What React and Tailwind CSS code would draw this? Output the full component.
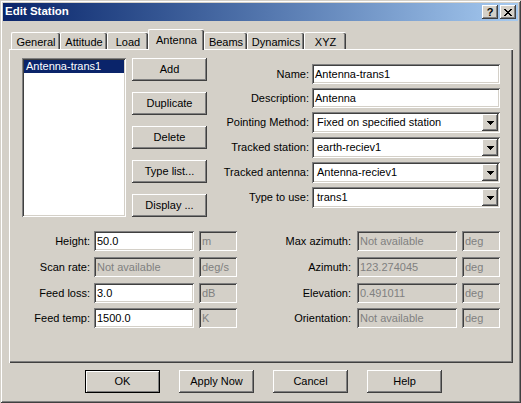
import React from "react";

const raised =
  "shadow-[inset_-1px_-1px_0_#404040,inset_1px_1px_0_#ffffff,inset_-2px_-2px_0_#808080,inset_2px_2px_0_#d4d0c8]";
const sunken =
  "shadow-[inset_1px_1px_0_#808080,inset_-1px_-1px_0_#ffffff,inset_2px_2px_0_#404040,inset_-2px_-2px_0_#d4d0c8]";

function Btn({ children, isDefault }) {
  if (isDefault) {
    return (
      <div className="w-[75px] h-[23px] border border-black flex items-center justify-center text-[11px] text-black shadow-[inset_1px_1px_0_#ffffff,inset_-1px_-1px_0_#808080]">
        {children}
      </div>
    );
  }
  return (
    <div className={`w-[75px] h-[23px] flex items-center justify-center text-[11px] text-black ${raised}`}>
      {children}
    </div>
  );
}

function Edit({ value, disabled, w }) {
  return (
    <div
      className={`${w} h-[20px] flex items-center pl-[3px] text-[11px] whitespace-nowrap overflow-hidden ${sunken} ${
        disabled ? "bg-[#d4d0c8] text-[#808080]" : "bg-white text-black"
      }`}
    >
      {value}
    </div>
  );
}

function Arrow() {
  return (
    <svg width="7" height="4" viewBox="0 0 7 4" shapeRendering="crispEdges">
      <path d="M0 0h7v1h-1v1h-1v1h-1v1h-1v-1h-1v-1h-1v-1h-1z" fill="#000" />
    </svg>
  );
}

function Combo({ value }) {
  return (
    <div className={`w-[188px] h-[21px] flex p-[2px] bg-white ${sunken}`}>
      <div className="flex-1 flex items-center pl-[3px] text-[11px] text-black whitespace-nowrap overflow-hidden">
        {value}
      </div>
      <div className={`w-[16px] h-[17px] bg-[#d4d0c8] flex items-center justify-center ${raised}`}>
        <Arrow />
      </div>
    </div>
  );
}

function CloseGlyph() {
  const rows = [
    "11000011",
    "01100110",
    "00111100",
    "00011000",
    "00111100",
    "01100110",
    "11000011",
  ];
  return (
    <svg width="8" height="7" viewBox="0 0 8 7" shapeRendering="crispEdges">
      {rows.map((r, y) =>
        r.split("").map((c, x) =>
          c === "1" ? <rect key={`${x}-${y}`} x={x} y={y} width="1" height="1" fill="#000" /> : null
        )
      )}
    </svg>
  );
}

function Tab({ label, w, selected }) {
  if (selected) {
    return (
      <div
        className={`${w} h-[21px] -mb-[1px] relative z-10 bg-[#d4d0c8] border-l border-t border-white rounded-tl-[2px] rounded-tr-[2px] shadow-[inset_-1px_0_0_#404040,inset_-2px_0_0_#808080] flex justify-center pt-[2px] text-[11px] text-black`}
      >
        {label}
      </div>
    );
  }
  return (
    <div
      className={`${w} h-[17px] bg-[#d4d0c8] border-l border-t border-white rounded-tl-[2px] rounded-tr-[2px] shadow-[inset_-1px_0_0_#404040,inset_-2px_0_0_#808080] flex justify-center pt-[1px] text-[11px] text-black`}
    >
      {label}
    </div>
  );
}

function Row({ label, children, mt }) {
  return (
    <div className={`flex items-center justify-end ${mt}`}>
      <span className="mr-[3px] text-[11px] text-black whitespace-nowrap">{label}</span>
      {children}
    </div>
  );
}

function BottomRow({ mt, lLabel, lValue, lDisabled, lUnit, rLabel, rValue, rUnit }) {
  return (
    <div className={`flex justify-between items-center ${mt}`}>
      <div className="flex items-center">
        <span className="w-[68px] text-right text-[11px] whitespace-nowrap text-black">{lLabel}</span>
        <div className="ml-[4px]">
          <Edit value={lValue} disabled={lDisabled} w="w-[100px]" />
        </div>
        <div className="ml-[5px]">
          <Edit value={lUnit} disabled w="w-[38px]" />
        </div>
      </div>
      <div className="flex items-center">
        <span className="text-right text-[11px] text-black whitespace-nowrap">{rLabel}</span>
        <div className="ml-[6px]">
          <Edit value={rValue} disabled w="w-[100px]" />
        </div>
        <div className="ml-[5px]">
          <Edit value={rUnit} disabled w="w-[38px]" />
        </div>
      </div>
    </div>
  );
}

export default function App() {
  return (
    <div className="w-[521px] h-[403px] bg-[#d4d0c8] p-[3px] flex flex-col font-['Liberation_Sans',Arial,sans-serif] shadow-[inset_1px_1px_0_#d4d0c8,inset_-1px_-1px_0_#404040,inset_2px_2px_0_#ffffff,inset_-2px_-2px_0_#808080] overflow-hidden">
      {/* Title bar */}
      <div className="h-[18px] flex items-center pl-[2px] pr-[2px] bg-linear-to-r from-[#0a246a] to-[#a6caf0]">
        <span className="flex-1 text-white font-bold text-[11.5px] leading-none">Edit Station</span>
        <div className={`w-[16px] h-[14px] bg-[#d4d0c8] flex items-center justify-center text-[11px] font-bold text-black leading-none ${raised}`}>
          ?
        </div>
        <div className={`ml-[2px] w-[16px] h-[14px] bg-[#d4d0c8] flex items-center justify-center ${raised}`}>
          <CloseGlyph />
        </div>
      </div>

      {/* Tabs */}
      <div className="mt-[8px] h-[20px] pl-[8px] flex items-end">
        <Tab label="General" w="w-[49px]" />
        <Tab label="Attitude" w="w-[47px]" />
        <Tab label="Load" w="w-[41px]" />
        <Tab label="Antenna" w="w-[56px]" selected />
        <Tab label="Beams" w="w-[43px]" />
        <Tab label="Dynamics" w="w-[57px]" />
        <Tab label="XYZ" w="w-[42px]" />
      </div>

      {/* Panel */}
      <div className="ml-[6px] w-[504px] h-[314px] pt-[9px] px-[13px] shadow-[inset_1px_1px_0_#ffffff,inset_-1px_-1px_0_#404040,inset_-2px_-2px_0_#808080]">
        <div className="flex">
          {/* list */}
          <div className={`w-[104px] h-[159px] bg-white p-[2px] ${sunken}`}>
            <div className="h-[13px] bg-[#0a246a] text-white text-[11px] leading-[13px] pl-[2px] whitespace-nowrap">
              Antenna-trans1
            </div>
          </div>
          {/* buttons */}
          <div className="ml-[6px] flex flex-col gap-[11px]">
            <Btn>Add</Btn>
            <Btn>Duplicate</Btn>
            <Btn>Delete</Btn>
            <Btn>Type list...</Btn>
            <Btn>Display ...</Btn>
          </div>
          {/* fields */}
          <div className="flex-1 flex flex-col pt-[6px]">
            <Row label="Name:">
              <Edit value="Antenna-trans1" w="w-[188px]" />
            </Row>
            <Row label="Description:" mt="mt-[4px]">
              <Edit value="Antenna" w="w-[188px]" />
            </Row>
            <Row label="Pointing Method:" mt="mt-[4px]">
              <Combo value="Fixed on specified station" />
            </Row>
            <Row label="Tracked station:" mt="mt-[4px]">
              <Combo value="earth-reciev1" />
            </Row>
            <Row label="Tracked antenna:" mt="mt-[4px]">
              <Combo value="Antenna-reciev1" />
            </Row>
            <Row label="Type to use:" mt="mt-[4px]">
              <Combo value="trans1" />
            </Row>
          </div>
        </div>

        <div className="mt-[14px]">
          <BottomRow lLabel="Height:" lValue="50.0" lUnit="m" rLabel="Max azimuth:" rValue="Not available" rUnit="deg" />
          <BottomRow mt="mt-[6px]" lLabel="Scan rate:" lValue="Not available" lDisabled lUnit="deg/s" rLabel="Azimuth:" rValue="123.274045" rUnit="deg" />
          <BottomRow mt="mt-[6px]" lLabel="Feed loss:" lValue="3.0" lUnit="dB" rLabel="Elevation:" rValue="0.491011" rUnit="deg" />
          <BottomRow mt="mt-[5px]" lLabel="Feed temp:" lValue="1500.0" lUnit="K" rLabel="Orientation:" rValue="Not available" rUnit="deg" />
        </div>
      </div>

      {/* Bottom buttons */}
      <div className="mt-[7px] pl-[82px] flex gap-[19px]">
        <Btn isDefault>OK</Btn>
        <Btn>Apply Now</Btn>
        <Btn>Cancel</Btn>
        <Btn>Help</Btn>
      </div>
    </div>
  );
}
